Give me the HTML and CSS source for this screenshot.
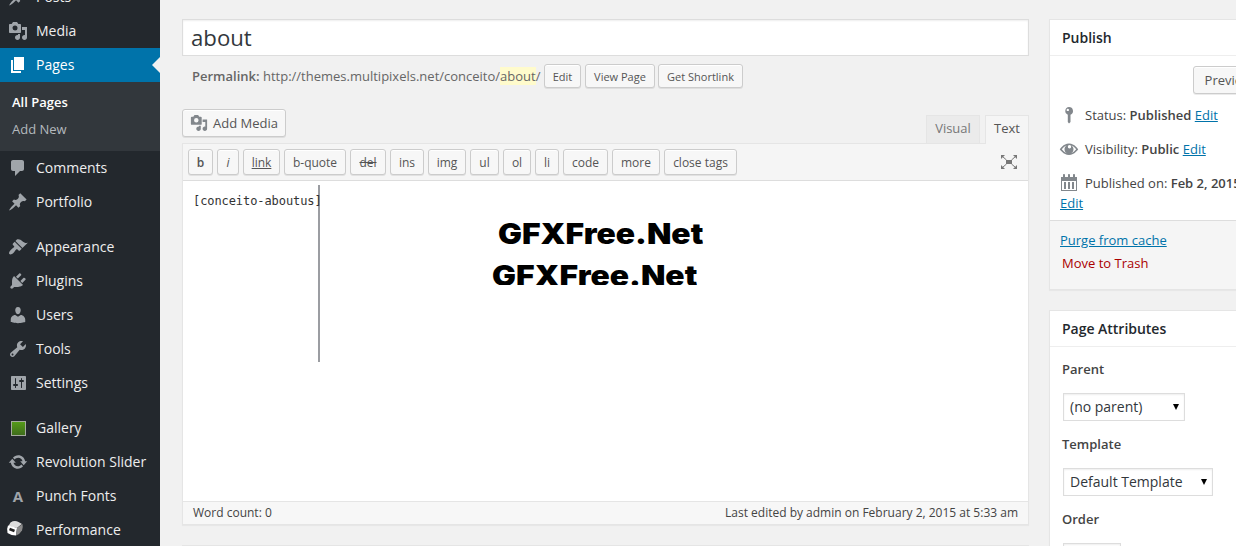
FILE: index.html
```html
<!DOCTYPE html>
<html lang="en">
<head>
<meta charset="utf-8">
<title>Edit Page</title>
<link rel="stylesheet" href="styles.css">
</head>
<body>
<svg class="defs" aria-hidden="true">
  <symbol id="pin" viewBox="0 0 20 20"><path d="M10.44 3.02l1.82-1.82 6.36 6.35-1.83 1.82c-1.05-.68-2.48-.57-3.41.36l-.75.75c-.92.93-1.04 2.35-.35 3.41l-1.83 1.82-2.41-2.41-2.8 2.79c-.42.42-3.38 2.71-3.8 2.29s1.86-3.39 2.28-3.81l2.79-2.79L4.1 9.36l1.83-1.82c1.05.69 2.48.57 3.4-.36l.75-.75c.93-.92 1.05-2.35.36-3.41z"/></symbol>
  <symbol id="media" viewBox="0 0 20 20"><path fill-rule="evenodd" d="M13 11V4c0-.55-.45-1-1-1h-1.67L9 1H5L3.67 3H2c-.55 0-1 .45-1 1v7c0 .55.45 1 1 1h10c.55 0 1-.45 1-1zM7 4.5a2.5 2.5 0 1 1 0 5 2.5 2.5 0 0 1 0-5zM14 6h5v10.5c0 1.38-1.12 2.5-2.5 2.5S14 17.880 14 16.500s1.120-2.500 2.500-2.500c.17 0 .34.020.5.050V9h-3V6zm-4 8.050V13h2v3.500c0 1.380-1.120 2.500-2.500 2.500S7 17.880 7 16.500 8.120 14 9.500 14c.17 0 .34.020.5.050z"/></symbol>
</svg>
<div class="app">
  <nav class="sidebar">
    <a class="item"><svg class="icon"><use href="#pin"/></svg>Posts</a>
    <a class="item"><svg class="icon"><use href="#media"/></svg>Media</a>
    <a class="item current"><svg class="icon" viewBox="0 0 20 20"><path d="M6 15V2h10v13H6zm-1 1h8v2H3V5h2v11z"/></svg>Pages</a>
    <div class="submenu"><a class="active">All Pages</a><a>Add New</a></div>
    <a class="item"><svg class="icon" viewBox="0 0 20 20"><path d="M5 2h9c1.100 0 2 .9 2 2v7c0 1.100-.9 2-2 2h-2l-5 5v-5H5c-1.100 0-2-.9-2-2V4c0-1.100.9-2 2-2z"/></svg>Comments</a>
    <a class="item"><svg class="icon"><use href="#pin"/></svg>Portfolio</a>
    <div class="separator"></div>
    <a class="item"><svg class="icon" viewBox="0 0 20 20"><path d="M14.480 11.060L7.410 3.990l1.500-1.500c.5-.56 2.300-.47 3.510.32 1.210.8 1.430 1.280 2.910 2.100 1.180.64 2.450 1.260 4.450.85zm-.71.71L6.700 4.700 4.930 6.470c-.39.39-.39 1.020 0 1.410l1.060 1.060c.39.39.39 1.030 0 1.420-.6.6-1.430 1.110-2.210 1.690-.35.260-.7.530-1.010.84C1.430 14.230.4 16.080 1.400 17.070c.99 1 2.840-.03 4.180-1.360.31-.31.580-.66.850-1.020.57-.78 1.080-1.610 1.690-2.210.39-.39 1.020-.39 1.410 0l1.060 1.060c.39.39 1.020.39 1.410 0z"/></svg>Appearance</a>
    <a class="item"><svg class="icon" viewBox="0 0 20 20"><path d="M13.110 4.360L9.870 7.600 8 5.730l3.240-3.240c.35-.34 1.050-.2 1.560.32.520.51.660 1.210.31 1.550zm-8 1.770l.91-1.120 9.010 9.010-1.190.84c-.71.71-2.630 1.160-3.820 1.160H6.140L4.900 17.260c-.59.590-1.540.590-2.120 0-.59-.58-.59-1.530 0-2.120l1.240-1.240v-3.880c0-1.130.4-3.190 1.090-3.890zm7.260 3.970l3.240-3.240c.34-.35 1.040-.21 1.550.31.520.51.660 1.210.31 1.550l-3.240 3.250z"/></svg>Plugins</a>
    <a class="item"><svg class="icon" viewBox="0 0 20 20"><path d="M10 9.250c-2.270 0-2.730-3.440-2.730-3.440C7 4.020 7.820 2 9.970 2c2.160 0 2.980 2.020 2.710 3.810 0 0-.41 3.440-2.680 3.440zm0 2.570L12.720 10c2.390 0 4.520 2.330 4.520 4.530v2.490s-3.650 1.130-7.240 1.130c-3.650 0-7.240-1.130-7.240-1.130v-2.490c0-2.250 1.940-4.480 4.470-4.480z"/></svg>Users</a>
    <a class="item"><svg class="icon" viewBox="0 0 20 20"><path fill-rule="evenodd" d="M16.680 9.770c-1.340 1.340-3.300 1.670-4.950.99l-5.410 6.520c-.99.990-2.590.990-3.580 0s-.99-2.590 0-3.570l6.520-5.420c-.68-1.650-.35-3.610.99-4.950 1.280-1.280 3.120-1.620 4.720-1.060l-2.890 2.890 2.820 2.820 2.860-2.870c.53 1.580.18 3.390-1.080 4.650zM3.810 16.210c.4.390 1.040.390 1.430 0 .4-.4.400-1.040 0-1.430-.39-.4-1.030-.4-1.430 0-.39.390-.39 1.030 0 1.430z"/></svg>Tools</a>
    <a class="item"><svg class="icon" viewBox="0 0 20 20"><path fill-rule="evenodd" d="M18 16V4c0-.55-.45-1-1-1H4c-.55 0-1 .45-1 1v12c0 .550.450 1 1 1h13c.550 0 1-.45 1-1zM8 11h1c.550 0 1 .450 1 1s-.45 1-1 1H8v1.500a.5.5 0 0 1-1 0V13H6a1 1 0 0 1 0-2h1V5.500a.5.5 0 0 1 1 0V11zm5-2h-1a1 1 0 0 1 0-2h1v-1.500a.5.5 0 0 1 1 0V7h1a1 1 0 0 1 0 2h-1v5.500a.5.5 0 0 1-1 0V9z"/></svg>Settings</a>
    <div class="separator"></div>
    <a class="item"><span class="icon-box"><span class="gallery-icon"></span></span>Gallery</a>
    <a class="item"><svg class="icon" viewBox="0 0 20 20"><path d="M10.200 3.280c3.530 0 6.430 2.610 6.920 6h2.080l-3.500 4-3.500-4h2.320c-.45-1.970-2.210-3.450-4.320-3.450-1.450 0-2.730.71-3.540 1.780L4.950 5.660C6.230 4.200 8.110 3.280 10.200 3.280zm-.4 13.440c-3.520 0-6.430-2.610-6.920-6H.8l3.500-4c1.170 1.330 2.330 2.670 3.500 4H5.480c.45 1.970 2.210 3.450 4.320 3.450 1.450 0 2.730-.71 3.540-1.780l1.710 1.950c-1.280 1.460-3.150 2.380-5.250 2.380z"/></svg>Revolution Slider</a>
    <a class="item"><span class="icon-box letter">A</span>Punch Fonts</a>
    <a class="item"><svg class="icon cube" viewBox="0 0 20 20"><path fill="#ddd" d="M5.500 3.500q4-2.500 8-.5l3.500 2-1.500 1-3.500 3-8.500-2z"/><path fill="#fff" d="M3 6.500q4.500.5 9 2.500l-1 7.500q-4.500 0-8.500-2.500Q1.500 10 3 6.500z"/><path fill="#8a8a8a" d="M12 9l5.500-4q.8 3-.5 6.500-2 3.500-6 5z"/><path stroke="#222" stroke-width="2.600" d="M4.500 10l5 2"/></svg>Performance</a>
  </nav>

  <main class="content">
    <input class="title" value="about">
    <div class="permalink">
      <span class="url"><strong>Permalink:</strong> http://themes.multipixels.net/conceito/<mark>about</mark>/</span>
      <button class="btn w37">Edit</button><button class="btn w70">View Page</button><button class="btn w85">Get Shortlink</button>
    </div>
    <div class="editor-tools">
      <button class="btn add-media"><svg class="icon"><use href="#media"/></svg>Add Media</button>
      <div class="tabs"><span class="tab">Visual</span><span class="tab selected">Text</span></div>
    </div>
    <section class="editor">
      <div class="toolbar">
        <button class="btn w25"><b>b</b></button><button class="btn w22"><i>i</i></button><button class="btn w37"><u>link</u></button><button class="btn w62">b-quote</button><button class="btn w36"><del>del</del></button><button class="btn w34">ins</button><button class="btn w38">img</button><button class="btn w29">ul</button><button class="btn w28">ol</button><button class="btn w24">li</button><button class="btn w45">code</button><button class="btn w48">more</button><button class="btn w73">close tags</button>
        <svg class="expand" viewBox="0 0 16 14"><path d="M5 5h6v4H5zM0 0h4L0 4zM16 0h-4l4 4zM0 14h4l-4-4zM16 14h-4l4-4z"/><path class="arms" d="M1.500 1.500L5.500 5M14.500 1.500L10.500 5M1.500 12.500L5.500 9M14.500 12.500L10.500 9"/></svg>
      </div>
      <div class="text-area"><span class="rule"></span><span class="code">[conceito-aboutus]</span>
        <span class="watermark first">GFXFree.Net</span>
        <span class="watermark second">GFXFree.Net</span>
      </div>
      <footer class="status"><span>Word count: 0</span><span>Last edited by admin on February 2, 2015 at 5:33 am</span></footer>
    </section>
    <div class="next-box"></div>
  </main>

  <aside class="side">
    <section class="box publish">
      <h3>Publish</h3>
      <div class="preview"><button class="btn">Preview Changes</button></div>
      <div class="row"><svg class="icon" viewBox="0 0 20 20"><path fill-rule="evenodd" d="M10 2a4 4 0 0 1 1.500 7.700V17L10 18.500 8.800 17V9.700A4 4 0 0 1 10 2zM8.800 3.700a1.200 1.200 0 1 0 0 2.400 1.200 1.200 0 0 0 0-2.400z"/></svg><span>Status: <b>Published</b> <a>Edit</a></span></div>
      <div class="row"><svg class="icon" viewBox="0 0 20 20"><path fill-rule="evenodd" d="M19.200 10.300S15.700 16 10 16 .8 10.300.8 10.300 4.300 4.500 10 4.500s9.200 5.800 9.200 5.800zM2.800 10.300c1 1.300 3 3.300 5.100 4-1.500-.8-2.400-2.200-2.400-4s.9-3.200 2.400-4c-2.100.7-4.100 2.700-5.100 4zm14.400 0c-1-1.300-3-3.300-5.100-4 1.500.8 2.400 2.200 2.400 4s-.9 3.200-2.400 4c2.100-.7 4.100-2.700 5.100-4zM10.500 6a1.700 1.700 0 1 0 0 3.400 1.700 1.700 0 0 0 0-3.400z"/></svg><span>Visibility: <b>Public</b> <a>Edit</a></span></div>
      <div class="row"><svg class="icon" viewBox="0 0 20 20"><path fill-rule="evenodd" d="M2 4h2V2c0-1.300 2-1.300 2 0v2h3V2c0-1.300 2-1.300 2 0v2h3V2c0-1.300 2-1.300 2 0v2h2v14H2zm1 4v9h14V8zm2 1h2v7H5zm4 0h2v7H9zm4 0h2v7h-2z"/></svg><span>Published on: <b>Feb 2, 2015 @ 5:33</b></span></div>
      <a class="date-edit">Edit</a>
      <div class="actions"><a>Purge from cache</a><a class="trash">Move to Trash</a></div>
    </section>
    <section class="box attributes">
      <h3>Page Attributes</h3>
      <label>Parent</label>
      <div class="select parent">(no parent)<i class="caret"></i></div>
      <label>Template</label>
      <div class="select template">Default Template<i class="caret"></i></div>
      <label>Order</label>
      <div class="select order"></div>
    </section>
  </aside>
</div>
</body>
</html>
```
FILE: styles.css
```css
* { box-sizing: border-box; }
body {
  margin: 0;
  height: 546px;
  overflow: hidden;
  background: #f1f1f1;
  color: #444;
  font: 13px/18px "Open Sans", sans-serif;
}
.defs { display: none; }
.app { display: flex; height: 546px; overflow: hidden; }

.sidebar { flex: none; width: 160px; margin-top: -20px; background: #23282d; color: #eee; }
.item { position: relative; display: flex; align-items: center; height: 34px; font-size: 14px; white-space: nowrap; }
.icon { flex: none; width: 20px; height: 20px; margin: 0 8px; fill: #a0a5aa; }
.item.current { background: #0073aa; color: #fff; }
.item.current .icon { fill: #fff; }
.item.current::after {
  content: "";
  position: absolute;
  right: 0;
  top: 9px;
  border: 8px solid transparent;
  border-left-width: 0;
  border-right-color: #f1f1f1;
}
.submenu { height: 69px; padding: 7px 12px; background: #32373c; }
.submenu a { display: block; height: 27px; line-height: 27px; color: #b4b9be; }
.submenu .active { color: #fff; font-weight: 600; }
.separator { height: 11px; }
.icon-box { display: flex; justify-content: center; width: 36px; }
.letter { color: #a0a5aa; font-weight: 700; font-size: 15px; }
.gallery-icon { width: 15px; height: 15px; border: 1px solid #a5aaa0; background: linear-gradient(#559a19, #3f6d1c); }
.cube { margin: 0 11px 2px 5px; }

.content { flex: none; width: 847px; margin: 19px 20px 0 22px; }
.title {
  display: block;
  width: 100%;
  height: 37px;
  padding: 0 8px 1px;
  border: 1px solid #ddd;
  background: #fff;
  box-shadow: inset 0 1px 2px rgba(0,0,0,.07);
  color: #32373c;
  font: 22.200px "Open Sans", sans-serif;
}
.permalink { display: flex; align-items: center; height: 24px; margin-top: 8px; padding-left: 10px; color: #666; }
.permalink .url { width: 352px; white-space: nowrap; }
.permalink strong { font-weight: 600; }
.permalink mark { background: #fffbcc; color: inherit; }
.btn {
  flex: none;
  display: flex;
  align-items: center;
  justify-content: center;
  height: 24px;
  padding: 0;
  border: 1px solid #ccc;
  border-radius: 3px;
  background: #f7f7f7;
  box-shadow: inset 0 1px 0 #fff, 0 1px 0 rgba(0,0,0,.08);
  color: #555;
  font: 12px "Open Sans", sans-serif;
  white-space: nowrap;
}
.permalink .btn { font-size: 11px; margin-right: 4px; }
.permalink .w70 { margin-right: 3px; }
.w22 { width: 22px; } .w24 { width: 24px; } .w25 { width: 25px; } .w28 { width: 28px; }
.w29 { width: 29px; } .w34 { width: 34px; } .w36 { width: 36px; } .w37 { width: 37px; }
.w38 { width: 38px; } .w45 { width: 45px; } .w48 { width: 48px; } .w62 { width: 62px; }
.w70 { width: 70px; } .w73 { width: 73px; } .w85 { width: 85px; }
.editor-tools { display: flex; justify-content: space-between; height: 34px; margin-top: 21px; }
.add-media { width: 104px; height: 28px; font-size: 13px; }
.add-media .icon { width: 18px; height: 18px; margin: 0 5px 0 0; fill: #82878c; }
.tabs { display: flex; gap: 5px; padding-top: 6px; }
.tab { width: 54px; height: 28px; padding-top: 3px; border: 1px solid #e5e5e5; border-bottom: 0; background: #ebebeb; color: #777; text-align: center; }
.tab.selected { position: relative; z-index: 1; width: 44px; height: 29px; background: #f5f5f5; color: #555; }
.editor { height: 382px; border: 1px solid #e5e5e5; box-shadow: 0 1px 1px rgba(0,0,0,.04); }
.toolbar { display: flex; align-items: center; gap: 4px; height: 37px; padding: 0 5px; border-bottom: 1px solid #ddd; background: #f5f5f5; }
.toolbar .btn { height: 26px; }
.toolbar b { font-weight: 600; }
.expand { width: 16px; height: 14px; margin: 0 6px 0 auto; fill: #777; }
.arms { fill: none; stroke: #777; stroke-width: 1; }
.text-area { position: relative; height: 320px; padding: 11px 10px; background: #fff; color: #333; font: 12px/18px "DejaVu Sans Mono", monospace; }
.code { position: relative; letter-spacing: -.08px; }
.rule { position: absolute; left: 135px; top: 4px; width: 2px; height: 177px; background: #9b9da2; }
.watermark { position: absolute; overflow: hidden; color: #000; font: 900 28px/34px Inter, sans-serif; transform: scaleX(1.135); transform-origin: left top; white-space: nowrap; }
.first { left: 315px; top: 36px; height: 34px; }
.second { left: 309px; top: 78px; height: 26px; }
.status { display: flex; justify-content: space-between; height: 23px; padding: 0 10px; border-top: 1px solid #e5e5e5; background: #f7f7f7; font-size: 12px; line-height: 21px; }
.next-box { height: 20px; margin-top: 20px; border: 1px solid #e5e5e5; background: #fff; }

.side { flex: none; width: 280px; padding-top: 19px; }
.box { border: 1px solid #e5e5e5; background: #fff; box-shadow: 0 1px 1px rgba(0,0,0,.04); }
.box h3 { height: 36px; margin: 0; padding: 8px 12px; border-bottom: 1px solid #eee; color: #23282d; font: 600 14px/19px "Open Sans", sans-serif; letter-spacing: -.02px; }
.box b, .box label { font-weight: 600; }
.box a { color: #0073aa; text-decoration: underline; }
.publish { height: 271px; }
.preview { display: flex; height: 42px; padding: 10px 0 0 143px; }
.preview .btn { width: 126px; height: 28px; font-size: 13px; }
.row { display: flex; align-items: center; height: 34px; padding-left: 9px; white-space: nowrap; }
.row .icon { width: 20px; margin: 0 6px 0 0; fill: #82878c; }
.publish .date-edit { display: block; margin: -7px 0 0 10px; height: 27px; line-height: 20px; }
.actions { display: flex; flex-direction: column; align-items: flex-start; height: 69px; padding: 10px 10px; border-top: 1px solid #ddd; background: #f5f5f5; }
.actions .trash { margin: 5px 0 0 2px; color: #a00; text-decoration: none; }
.attributes { height: 260px; margin-top: 20px; }
.attributes label { display: block; margin: 14px 12px 15px; }
.attributes h3 + label { margin-top: 13px; }
.select { display: flex; align-items: center; justify-content: space-between; height: 28px; margin: 0 13px; padding: 0 5px 0 6px; border: 1px solid #ddd; box-shadow: inset 0 1px 2px rgba(0,0,0,.07); color: #32373c; font-size: 14px; }
.parent { width: 122px; }
.template { width: 150px; }
.order { width: 58px; }
.caret { border: 3.500px solid transparent; border-top: 6px solid #000; border-bottom: 0; }
```
